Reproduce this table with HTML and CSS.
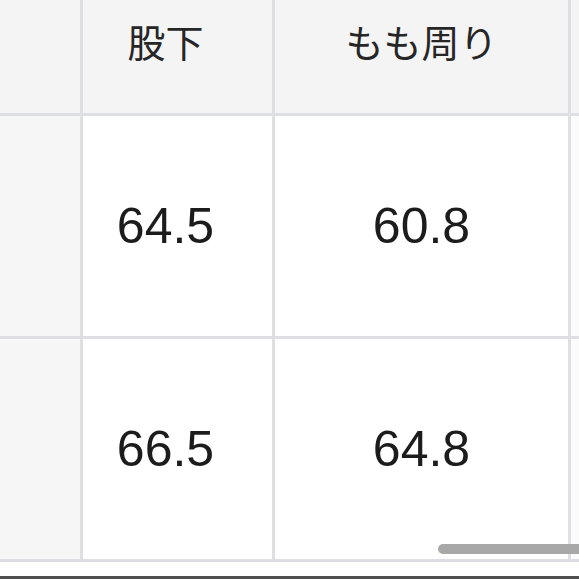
FILE: index.html
```html
<!DOCTYPE html>
<html lang="ja">
<head>
<meta charset="utf-8">
<link rel="stylesheet" href="styles.css">
</head>
<body>
<div class="page">
  <div class="table">
    <div class="cell head side"></div>
    <div class="cell head c2"><span class="jp">股下</span></div>
    <div class="cell head c3"><span class="jp">もも周り</span></div>
    <div class="cell head c4"></div>

    <div class="cell side"></div>
    <div class="cell body c2"><span class="num">64.5</span></div>
    <div class="cell body c3"><span class="num">60.8</span></div>
    <div class="cell body c4"></div>

    <div class="cell side"></div>
    <div class="cell body c2"><span class="num">66.5</span></div>
    <div class="cell body c3"><span class="num">64.8</span></div>
    <div class="cell body c4"></div>
  </div>
  <div class="scrollbar"></div>
</div>
<div class="bottom-line"></div>
</body>
</html>
```
FILE: styles.css
```css
html, body {
  margin: 0;
  padding: 0;
  background: #ffffff;
}
body {
  width: 579px;
  height: 579px;
  overflow: hidden;
}
.page {
  position: relative;
  height: 576px;
  background: #ffffff;
}
.table {
  display: grid;
  grid-template-columns: 80px 189px 293px 1fr;
  grid-template-rows: 113px 220px 220px;
  column-gap: 3px;
  row-gap: 3px;
  background: #dddfe2;
  padding-bottom: 3px;
}
.cell {
  display: flex;
  justify-content: center;
  align-items: center;
  background: #ffffff;
}
.cell.head {
  background: #f4f4f5;
  align-items: flex-start;
  padding-top: 22px;
  box-sizing: border-box;
}
.cell.side {
  background: #f6f6f6;
}
.cell.head.side {
  background: #f4f4f5;
}
.cell.c2 {
  padding-right: 24px;
}
.cell.body.c4 {
  background: #fbfbfb;
}
.jp {
  font-family: "Noto Sans CJK JP", "Noto Sans", sans-serif;
  font-size: 38px;
  line-height: 1;
  font-weight: 400;
  color: #262626;
}
.num {
  font-family: "Liberation Sans", Arial, sans-serif;
  font-size: 50px;
  line-height: 1;
  color: #1c1c1c;
}
.scrollbar {
  position: absolute;
  left: 438px;
  top: 544px;
  width: 160px;
  height: 10px;
  border-radius: 5px;
  background: #a8a8a8;
}
.bottom-line {
  height: 3px;
  background: #4f4f4f;
}
```
